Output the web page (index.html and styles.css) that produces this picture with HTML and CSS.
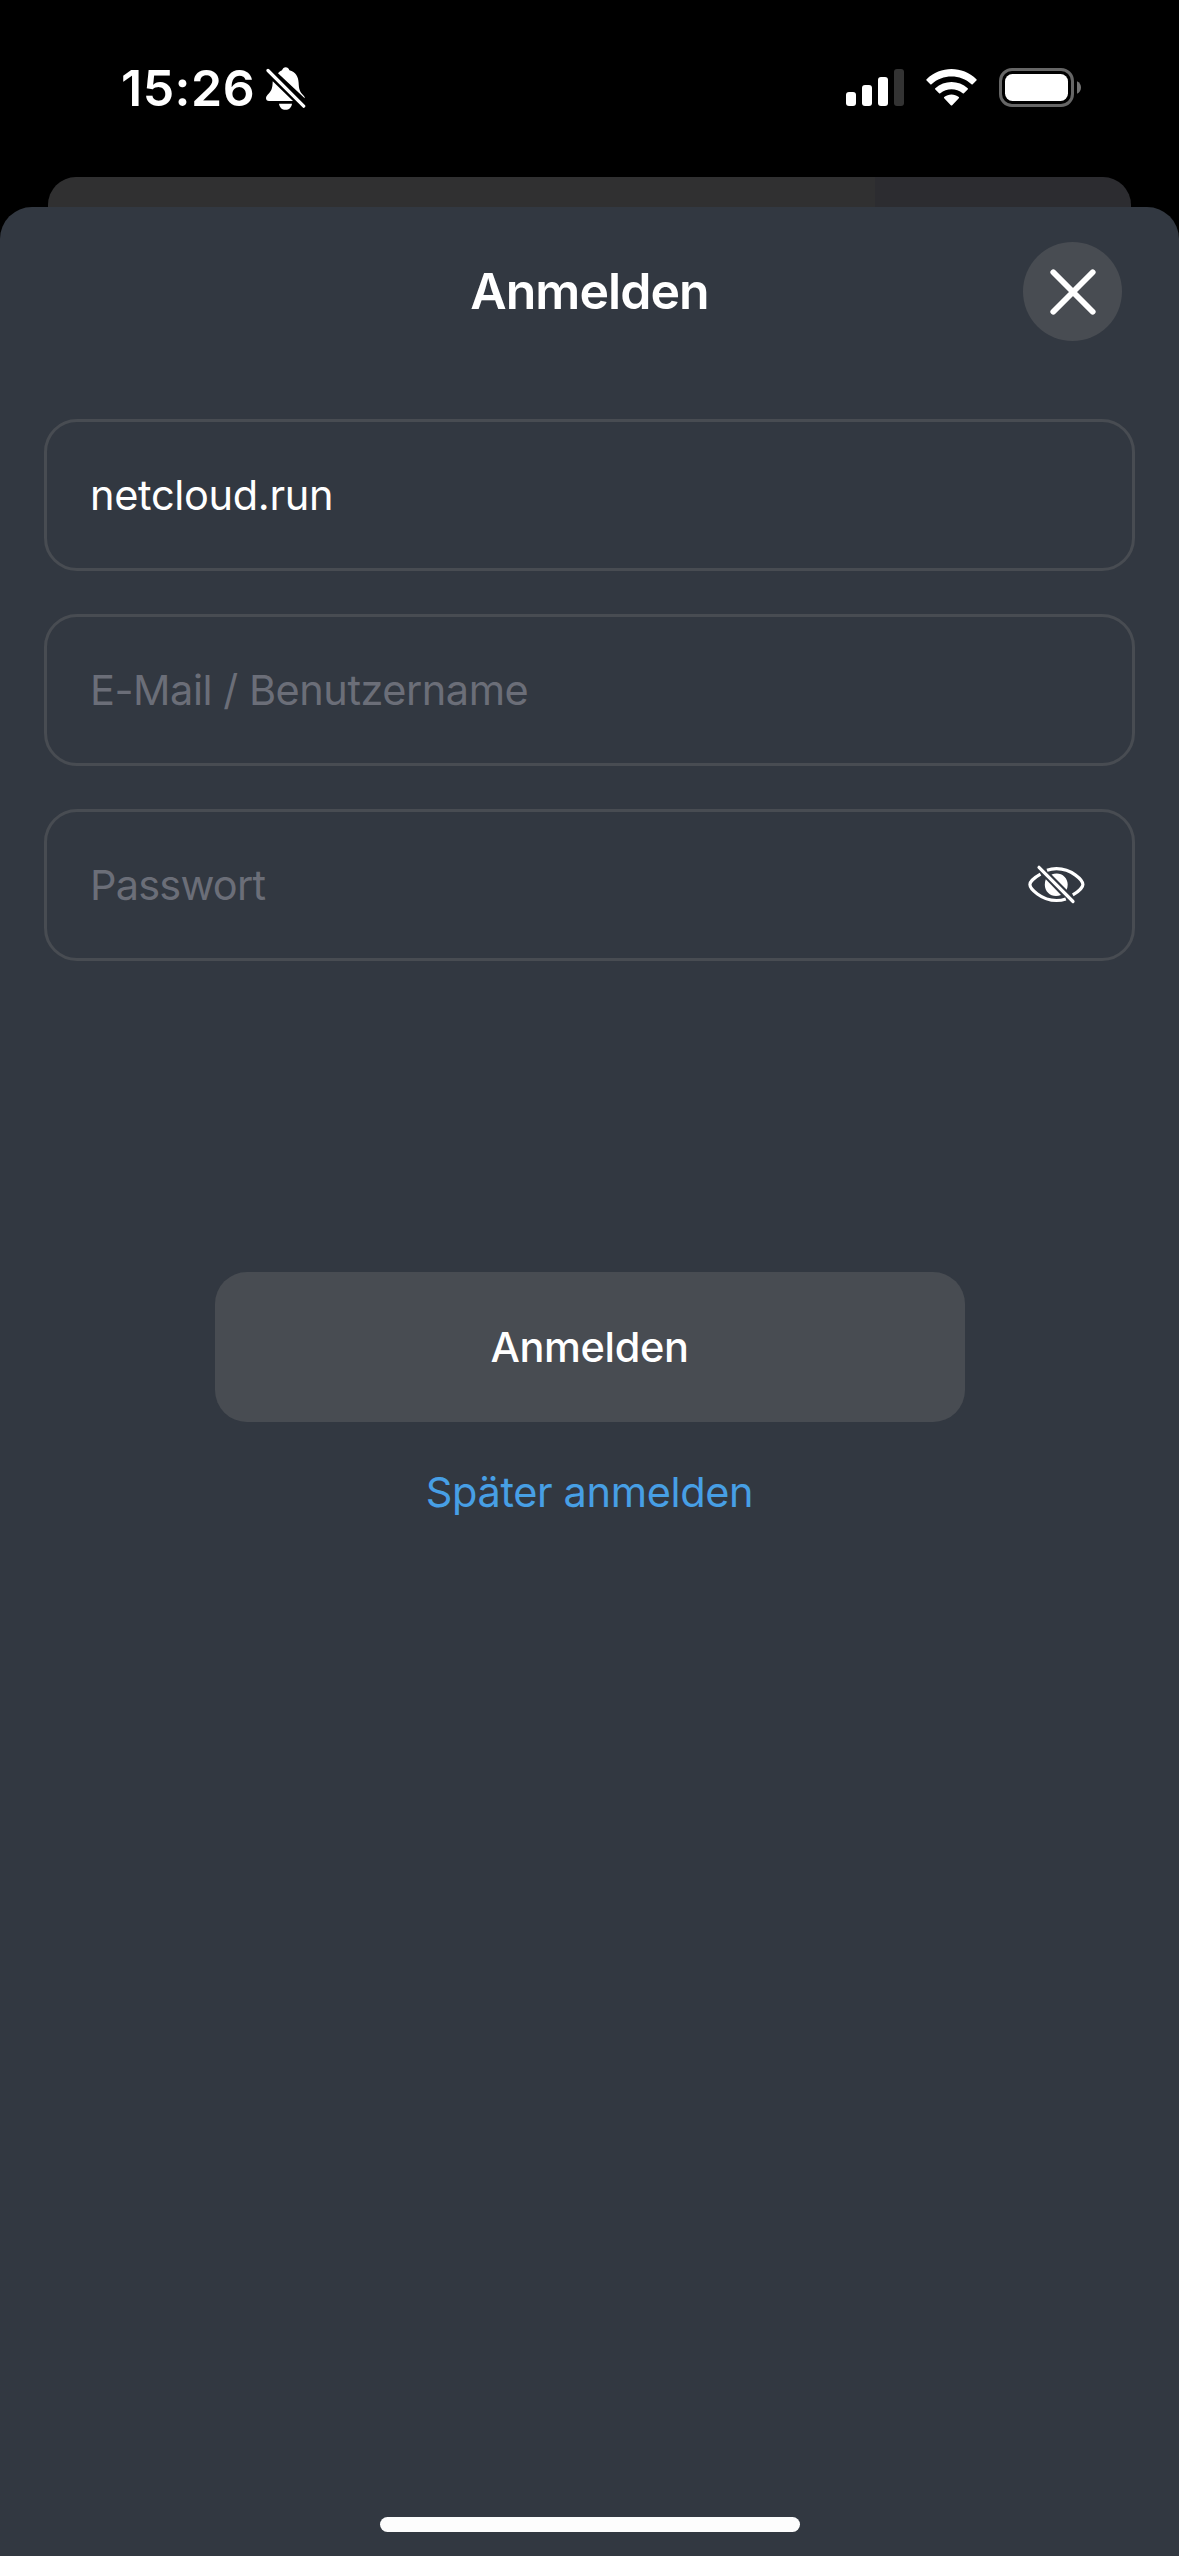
FILE: index.html
```html
<!DOCTYPE html>
<html lang="de">
<head>
<meta charset="utf-8">
<title>Anmelden</title>
<link rel="stylesheet" href="styles.css">
</head>
<body>
<div class="screen">
  <header class="status">
    <div class="status-left">
      <span class="time">15:26</span>
      <svg class="bell" width="40" height="44" viewBox="0 0 40 44">
        <path fill="#fff" d="M12 6.2C13.800 4.600 14.600 4 16 3.300C16.800 1.200 18 .2 19.600 .2C21.500 .2 22.800 1.300 23.400 3.300C29.600 5 32.300 9.500 32.600 15.500C32.900 21.500 33.400 24.500 37.500 28.500C38.500 29.500 38.900 30.300 38.700 31.300Z"/>
        <path fill="#fff" d="M6.700 14.200L27 34H3C1 34 0 32.800 0 31.300C0 29.400 1 28.400 2.800 26.400C6 23 6.500 20 6.700 14.200Z"/>
        <path fill="#fff" d="M13 36.700H26C25.500 40.500 23 42.800 19.500 42.800S13.500 40.500 13 36.700Z"/>
        <path d="M2 3.500L37.700 39.200" stroke="#fff" stroke-width="3.200" stroke-linecap="round"/>
      </svg>
    </div>
    <div class="status-right">
      <svg class="signal" width="58" height="38" viewBox="0 0 58 38" fill="#fff">
        <rect x="0" y="23" width="10" height="14" rx="3"/>
        <rect x="16" y="16" width="10" height="21" rx="3"/>
        <rect x="32" y="8" width="10" height="29" rx="3"/>
        <rect x="48" y="0" width="10" height="37" rx="3" fill="#333"/>
      </svg>
      <svg class="wifi" width="51" height="38" viewBox="0 0 51 38" fill="#fff">
        <path d="M.6 10.300C14.500-3.300 36.500-3.300 50.400 10.300Q51 10.900 50.400 11.500L46.700 15.200Q46.100 15.800 45.500 15.200C34.300 4.900 16.700 4.900 5.500 15.200Q4.900 15.800 4.300 15.200L.6 11.500Q0 10.900 .6 10.300Z"/>
        <path d="M9.300 19.200C18.400 10.800 32.600 10.800 41.700 19.200Q42.300 19.800 41.700 20.400L37.900 24.200Q37.300 24.800 36.700 24.200C30.300 18.800 20.700 18.800 14.300 24.200Q13.700 24.800 13.100 24.200L9.300 20.400Q8.700 19.800 9.300 19.200Z"/>
        <path d="M18.200 28.100C22.400 24.700 28.600 24.700 32.800 28.100Q33.400 28.700 32.800 29.300L26.200 36.200Q25.500 36.900 24.800 36.200L18.200 29.300Q17.600 28.700 18.200 28.100Z"/>
      </svg>
      <svg class="battery" width="82" height="40" viewBox="0 0 82 40">
        <rect x="1.500" y="1.500" width="72" height="36" rx="11.500" fill="none" stroke="#666" stroke-width="3"/>
        <rect x="6" y="6" width="63" height="27" rx="7.500" fill="#fff"/>
        <path d="M78 13.300C80.500 14.300 82 16.700 82 19.500S80.500 24.700 78 25.700Z" fill="#737373"/>
      </svg>
    </div>
  </header>
  <div class="backdrop-sheet"></div>
  <main class="sheet">
    <div class="titlebar">
      <h1 class="title">Anmelden</h1>
      <div class="close" role="button" aria-label="Schließen">
        <svg width="99" height="99" viewBox="0 0 99 99"><path d="M30.300 30.300L69.700 69.700M69.700 30.300L30.300 69.700" stroke="#fff" stroke-width="5.800" stroke-linecap="round"/></svg>
      </div>
    </div>
    <form class="form">
      <div class="field"><span class="value">netcloud.run</span></div>
      <div class="field"><span class="placeholder mail">E-Mail / Benutzername</span></div>
      <div class="field">
        <span class="placeholder pass">Passwort</span>
        <svg class="eye" width="58" height="40" viewBox="0 0 58 40" fill="none" stroke="#fff" stroke-width="3.200">
          <path d="M12.500 9.200C5.700 13 1.900 17.300 1.900 19.500C1.900 23.500 13 35.500 28.500 35.500C32 35.500 35 34.900 37.800 33.900"/>
          <path d="M19 5.300C22 4.200 25 3.700 28.500 3.700C44 3.700 54.900 15.500 54.900 19.500C54.900 22 51 26.400 44.800 29.900"/>
          <path fill="#fff" stroke="none" d="M17.800 14.300L33 29.900C25 33.400 16.800 28 16.800 19.700C16.800 17.700 17.200 15.900 17.800 14.300ZM23.500 9.600C31.500 5.800 39.700 11.400 39.700 19.500C39.700 21.500 39.300 23.200 38.700 24.700Z"/>
          <path d="M11 2.300L45 36.500" stroke-linecap="round"/>
        </svg>
      </div>
    </form>
    <div class="actions">
      <div class="submit" role="button">Anmelden</div>
      <a class="later">Später anmelden</a>
    </div>
    <div class="home-indicator"></div>
  </main>
</div>
</body>
</html>
```
FILE: styles.css
```css
* { box-sizing: border-box; }
body { margin: 0; background: #000; }
.screen {
  width: 1179px;
  height: 2556px;
  display: flex;
  flex-direction: column;
  overflow: hidden;
  background: #000;
  color: #fff;
  font-family: Inter, "Liberation Sans", sans-serif;
}
.status {
  height: 177px;
  flex: none;
  display: flex;
  justify-content: space-between;
  align-items: flex-start;
  padding: 58px 98px 0 121px;
}
.status-left, .status-right { display: flex; align-items: flex-start; }
.time {
  font-size: 50px;
  line-height: 60px;
  font-weight: 600;
  letter-spacing: 0.5px;
}
.bell { margin: 9px 0 0 11px; }
.signal { margin-top: 11px; }
.wifi { margin: 11px 0 0 22px; }
.battery { margin: 10px 0 0 22px; }
.backdrop-sheet {
  flex: none;
  height: 30px;
  margin: 0 48px;
  border-radius: 28px 28px 0 0;
  background: linear-gradient(90deg, #303031 827px, #2c2c30 827px);
}
.sheet {
  flex: 1;
  display: flex;
  flex-direction: column;
  background: #323841;
  border-radius: 32px 32px 0 0;
}
.titlebar {
  display: grid;
  grid-template-columns: 99px 1fr 99px;
  align-items: center;
  padding: 35px 57px 0;
  height: 134px;
}
.title {
  grid-column: 2;
  margin: 0;
  padding-bottom: 2px;
  text-align: center;
  font-size: 50px;
  line-height: 60px;
  font-weight: 600;
  letter-spacing: -0.95px;
}
.close {
  width: 99px;
  height: 99px;
  border-radius: 50%;
  background: #484c52;
}
.close svg { display: block; }
.form {
  display: flex;
  flex-direction: column;
  gap: 43px;
  padding: 78px 44px 0;
}
.field {
  height: 152px;
  display: flex;
  align-items: center;
  justify-content: space-between;
  padding: 0 46px 0 43px;
  border: 3px solid #484c52;
  border-radius: 33px;
  font-size: 41.5px;
  line-height: 50px;
}
.value { letter-spacing: -0.33px; }
.placeholder { color: #6b6e78; }
.mail { letter-spacing: -0.48px; }
.pass { letter-spacing: -0.8px; }
.actions {
  display: flex;
  flex-direction: column;
  align-items: center;
  margin-top: 311px;
}
.submit {
  width: 750px;
  height: 150px;
  display: flex;
  align-items: center;
  justify-content: center;
  border-radius: 32px;
  background: #484c52;
  font-size: 41.5px;
  line-height: 50px;
  font-weight: 500;
  letter-spacing: -0.37px;
}
.later {
  margin-top: 45px;
  color: #479fe5;
  font-size: 41.5px;
  line-height: 50px;
  letter-spacing: -0.37px;
}
.home-indicator {
  width: 420px;
  height: 15px;
  margin: auto auto 24px;
  border-radius: 8px;
  background: #fdfdfd;
}
```
